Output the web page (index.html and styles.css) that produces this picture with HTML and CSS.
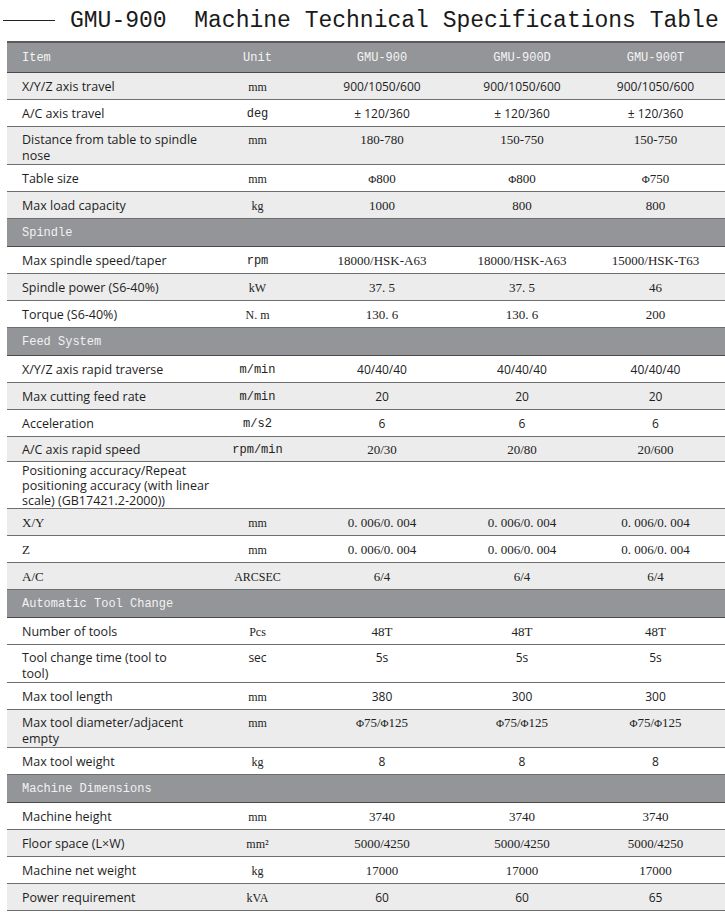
FILE: index.html
```html
<!DOCTYPE html>
<html lang="en">
<head>
    <meta charset="UTF-8">
    <meta name="viewport" content="width=device-width, initial-scale=1.0">
    <title>GMU-900 Technical Specifications</title>
    <link rel="stylesheet" href="styles.css">
</head>
<body>
    <!-- Title -->
    <div class="title">
        <span class="title-line"></span>
        <h1>GMU-900  Machine Technical Specifications Table</h1>
    </div>

    <!-- Spec table -->
    <table class="specs">
        <colgroup>
            <col class="c-item">
            <col class="c-unit">
            <col class="c-a">
            <col class="c-b">
            <col class="c-c">
        </colgroup>
        <thead>
            <tr>
                <th class="item">Item</th>
                <th>Unit</th>
                <th>GMU-900</th>
                <th>GMU-900D</th>
                <th>GMU-900T</th>
            </tr>
        </thead>
        <tbody>
            <tr class="grey">
                <td class="item">X/Y/Z axis travel</td>
                <td class="unit">mm</td>
                <td class="sans">900/1050/600</td>
                <td class="sans">900/1050/600</td>
                <td class="sans">900/1050/600</td>
            </tr>
            <tr>
                <td class="item">A/C axis travel</td>
                <td class="unit mono">deg</td>
                <td class="sans">± 120/360</td>
                <td class="sans">± 120/360</td>
                <td class="sans">± 120/360</td>
            </tr>
            <tr class="grey two">
                <td class="item">Distance from table to spindle<br>nose</td>
                <td class="unit">mm</td>
                <td>180-780</td>
                <td>150-750</td>
                <td>150-750</td>
            </tr>
            <tr>
                <td class="item">Table size</td>
                <td class="unit">mm</td>
                <td><span class="phi">Φ</span>800</td>
                <td><span class="phi">Φ</span>800</td>
                <td><span class="phi">Φ</span>750</td>
            </tr>
            <tr class="grey">
                <td class="item">Max load capacity</td>
                <td class="unit">kg</td>
                <td>1000</td>
                <td>800</td>
                <td>800</td>
            </tr>

            <tr class="section"><td colspan="5">Spindle</td></tr>
            <tr>
                <td class="item">Max spindle speed/taper</td>
                <td class="unit mono">rpm</td>
                <td>18000/HSK-A63</td>
                <td>18000/HSK-A63</td>
                <td>15000/HSK-T63</td>
            </tr>
            <tr class="grey">
                <td class="item">Spindle power (S6-40%)</td>
                <td class="unit">kW</td>
                <td>37. 5</td>
                <td>37. 5</td>
                <td>46</td>
            </tr>
            <tr>
                <td class="item">Torque (S6-40%)</td>
                <td class="unit">N. m</td>
                <td>130. 6</td>
                <td>130. 6</td>
                <td>200</td>
            </tr>

            <tr class="section"><td colspan="5">Feed System</td></tr>
            <tr>
                <td class="item">X/Y/Z axis rapid traverse</td>
                <td class="unit mono">m/min</td>
                <td class="sans">40/40/40</td>
                <td class="sans">40/40/40</td>
                <td class="sans">40/40/40</td>
            </tr>
            <tr class="grey">
                <td class="item">Max cutting feed rate</td>
                <td class="unit mono">m/min</td>
                <td class="sans">20</td>
                <td class="sans">20</td>
                <td class="sans">20</td>
            </tr>
            <tr>
                <td class="item">Acceleration</td>
                <td class="unit mono">m/s2</td>
                <td class="sans">6</td>
                <td class="sans">6</td>
                <td class="sans">6</td>
            </tr>
            <tr class="grey short">
                <td class="item">A/C axis rapid speed</td>
                <td class="unit mono">rpm/min</td>
                <td>20/30</td>
                <td>20/80</td>
                <td>20/600</td>
            </tr>
            <tr class="three">
                <td class="item">Positioning accuracy/Repeat<br>positioning accuracy (with linear<br>scale) (GB17421.2-2000))</td>
                <td></td>
                <td></td>
                <td></td>
                <td></td>
            </tr>
            <tr class="grey">
                <td class="item serif">X/Y</td>
                <td class="unit">mm</td>
                <td>0. 006/0. 004</td>
                <td>0. 006/0. 004</td>
                <td>0. 006/0. 004</td>
            </tr>
            <tr>
                <td class="item serif">Z</td>
                <td class="unit">mm</td>
                <td>0. 006/0. 004</td>
                <td>0. 006/0. 004</td>
                <td>0. 006/0. 004</td>
            </tr>
            <tr class="grey">
                <td class="item serif">A/C</td>
                <td class="unit">ARCSEC</td>
                <td>6/4</td>
                <td>6/4</td>
                <td>6/4</td>
            </tr>

            <tr class="section"><td colspan="5">Automatic Tool Change</td></tr>
            <tr>
                <td class="item">Number of tools</td>
                <td class="unit">Pcs</td>
                <td>48T</td>
                <td>48T</td>
                <td>48T</td>
            </tr>
            <tr class="two">
                <td class="item">Tool change time (tool to<br>tool)</td>
                <td class="unit sans">sec</td>
                <td class="sans">5s</td>
                <td class="sans">5s</td>
                <td class="sans">5s</td>
            </tr>
            <tr>
                <td class="item">Max tool length</td>
                <td class="unit">mm</td>
                <td class="sans">380</td>
                <td class="sans">300</td>
                <td class="sans">300</td>
            </tr>
            <tr class="grey two">
                <td class="item">Max tool diameter/adjacent<br>empty</td>
                <td class="unit">mm</td>
                <td><span class="phi">Φ</span>75/<span class="phi">Φ</span>125</td>
                <td><span class="phi">Φ</span>75/<span class="phi">Φ</span>125</td>
                <td><span class="phi">Φ</span>75/<span class="phi">Φ</span>125</td>
            </tr>
            <tr>
                <td class="item">Max tool weight</td>
                <td class="unit">kg</td>
                <td class="sans">8</td>
                <td class="sans">8</td>
                <td class="sans">8</td>
            </tr>

            <tr class="section"><td colspan="5">Machine Dimensions</td></tr>
            <tr>
                <td class="item">Machine height</td>
                <td class="unit">mm</td>
                <td>3740</td>
                <td>3740</td>
                <td>3740</td>
            </tr>
            <tr class="grey">
                <td class="item">Floor space (L×W)</td>
                <td class="unit">mm²</td>
                <td>5000/4250</td>
                <td>5000/4250</td>
                <td>5000/4250</td>
            </tr>
            <tr>
                <td class="item">Machine net weight</td>
                <td class="unit">kg</td>
                <td>17000</td>
                <td>17000</td>
                <td>17000</td>
            </tr>
            <tr class="grey">
                <td class="item">Power requirement</td>
                <td class="unit">kVA</td>
                <td class="sans">60</td>
                <td class="sans">60</td>
                <td class="sans">65</td>
            </tr>
        </tbody>
    </table>
</body>
</html>
```

FILE: styles.css
```css
body {
    margin: 0;
    padding: 0;
    background-color: #fff;
    color: #222;
    font-family: "Liberation Serif", serif;
    overflow: hidden;
}

/* Title */
.title {
    display: flex;
    align-items: center;
    height: 41px;
}

.title-line {
    width: 52px;
    height: 1px;
    margin-left: 3px;
    margin-right: 15px;
    background-color: #222;
}

.title h1 {
    margin: 0;
    font-family: "Liberation Mono", monospace;
    font-size: 23px;
    font-weight: normal;
    white-space: pre;
    color: #1a1a1a;
}

/* Table */
.specs {
    margin-left: 7px;
    width: 718px;
    border-collapse: collapse;
    table-layout: fixed;
}

.c-item { width: 198px; }
.c-unit { width: 105px; }
.c-a { width: 144px; }
.c-b { width: 136px; }
.c-c { width: 135px; }

.specs th {
    height: 29px;
    padding: 0;
    background-color: #939598;
    color: #f4f4f4;
    font-family: "Liberation Mono", monospace;
    font-size: 12px;
    font-weight: normal;
    text-align: center;
    border-top: 2px solid #5a5a5a;
    border-bottom: 1px solid #4a4a4a;
}

.specs td {
    padding: 6px 0 4px;
    line-height: 16px;
    font-size: 13px;
    text-align: center;
    vertical-align: top;
    border-bottom: 1px solid #6e6e6e;
}

.specs tr.two td {
    padding: 5px 0 0;
}

.specs tr.short td {
    padding: 5px 0 3px;
}

.specs tr.three td {
    padding: 1px 0 0;
    line-height: 15px;
}

.specs th:last-child,
.specs tr td:last-child {
    padding-right: 4px;
}

.specs th.item,
.specs tr td.item {
    text-align: left;
    padding-left: 15px;
}

.specs td.item {
    font-family: "Open Sans", sans-serif;
    font-size: 12.5px;
    color: #1e1e1e;
    white-space: nowrap;
}

.specs td.item.serif {
    font-family: "Liberation Serif", serif;
    font-size: 13px;
}

.specs td.unit {
    font-size: 12px;
}

.specs td.mono {
    font-family: "Liberation Mono", monospace;
    font-size: 12px;
}

.specs td.sans {
    font-family: "Open Sans", sans-serif;
    font-size: 12px;
}

.phi {
    font-size: 11px;
}

.specs tr.grey td {
    background-color: #ececec;
}

.specs tr.section td {
    padding: 6px 0 5px 15px;
    background-color: #939598;
    color: #f2f2f2;
    font-family: "Liberation Mono", monospace;
    font-size: 12px;
    text-align: left;
    border-top: 1px solid #4a4a4a;
    border-bottom: 1px solid #4a4a4a;
}
```
